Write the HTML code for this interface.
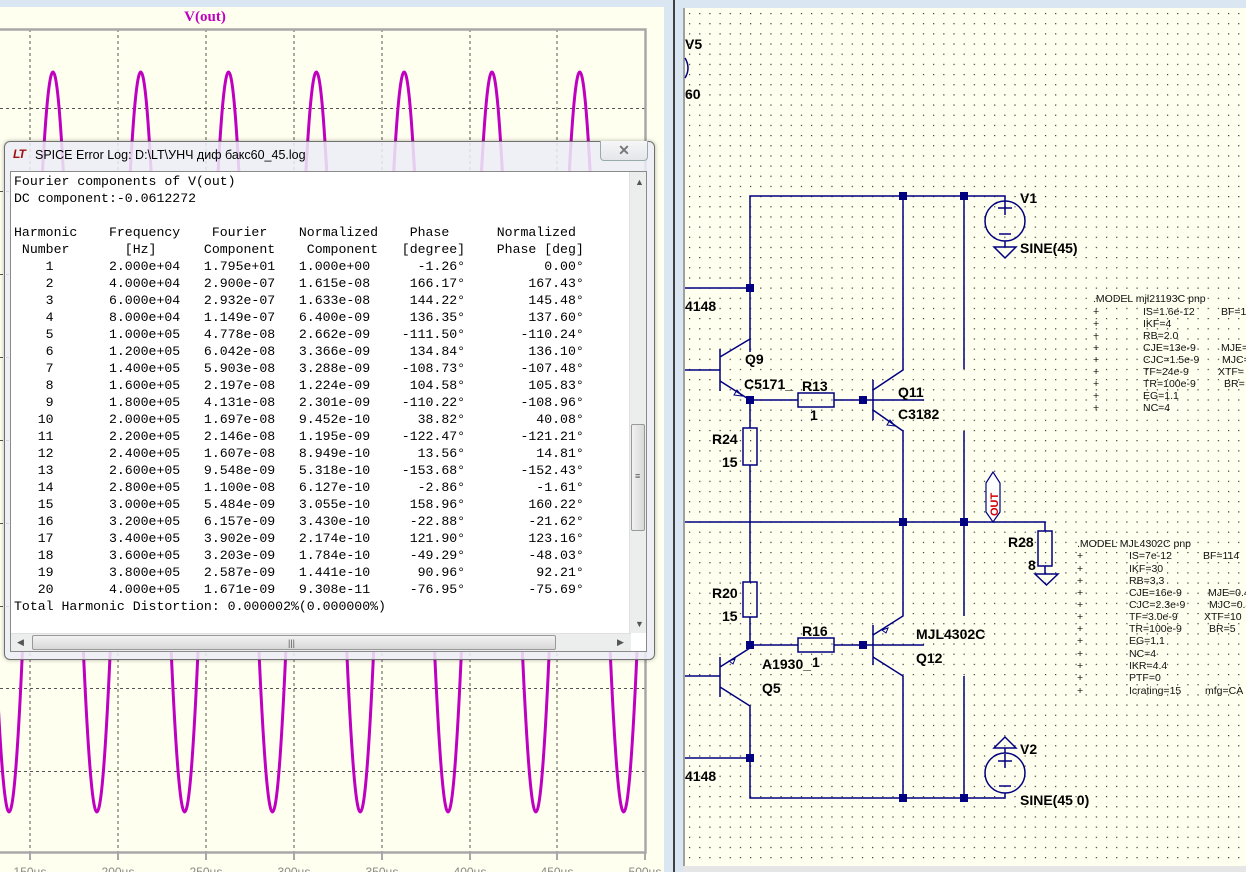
<!DOCTYPE html>
<html><head><meta charset="utf-8">
<style>
*{margin:0;padding:0;box-sizing:border-box}
body{width:1246px;height:872px;overflow:hidden;background:#dbe6f3;position:relative;font-family:"Liberation Sans",sans-serif}
svg{position:absolute;left:0;top:0}
#dlg{position:absolute;left:4px;top:141px;width:651px;height:519px;border:1px solid #707070;border-radius:6px;background:rgba(236,238,246,0.86);box-shadow:0 0 4px rgba(0,0,0,0.3)}
#title{position:absolute;left:30px;top:6px;font-size:12.5px;color:#000;font-family:"Liberation Sans","Noto Sans CJK SC",sans-serif}
#logo{position:absolute;left:8px;top:5px;font-size:12px;font-weight:bold;font-style:italic;color:#a01010;letter-spacing:-1px}
#close{position:absolute;left:595px;top:-1px;width:48px;height:20px;border:1px solid #9aa;border-top:none;border-radius:0 0 4px 4px;background:linear-gradient(#f6f6f8,#e4e6ea);text-align:center;color:#777;font-size:14px;line-height:18px;font-weight:bold}
#box{position:absolute;left:5px;top:29px;width:637px;height:481px;border:1px solid #8a8a8a;background:#fff;overflow:hidden}
pre{position:absolute;left:3px;top:1px;font-family:"Liberation Mono",monospace;font-size:13.2px;line-height:17px;color:#000}
#vs{position:absolute;right:0;top:0;width:17px;height:461px;background:#eceded;border-left:1px solid #e0e0e0}
#vth{position:absolute;left:1px;top:252px;width:14px;height:107px;border:1px solid #999;border-radius:2px;background:linear-gradient(90deg,#f2f2f2,#d8d8d8)}
#hs{position:absolute;left:0;bottom:0;width:620px;height:18px;background:#eceded;border-top:1px solid #e0e0e0}
#hth{position:absolute;left:21px;top:1px;width:524px;height:15px;border:1px solid #999;border-radius:2px;background:linear-gradient(#f2f2f2,#d8d8d8)}
.grip{position:absolute;font-size:9px;color:#555;line-height:9px}
</style></head><body>
<svg width="1246" height="872" viewBox="0 0 1246 872">
<defs>
<pattern id="dots" patternUnits="userSpaceOnUse" x="750" y="196" width="10.17" height="10.17"><rect x="0" y="0" width="1.2" height="1.2" fill="#333"/></pattern>
<clipPath id="pc"><rect x="0" y="29" width="645" height="823"/></clipPath>
</defs>
<!-- plot panel -->
<rect x="0" y="7" width="664" height="865" fill="#ffffef"/>
<rect x="664" y="0" width="9" height="872" fill="#dbe6f3"/>
<rect x="673" y="0" width="2" height="872" fill="#404040"/>
<rect x="675" y="0" width="8" height="872" fill="#dbe6f3"/>
<text x="205" y="21" font-family="Liberation Serif" font-weight="bold" font-size="15" fill="#c000c0" text-anchor="middle">V(out)</text>
<g stroke="#555" stroke-width="1" stroke-dasharray="3,3">
<line x1="30" y1="29" x2="30" y2="852"/><line x1="118" y1="29" x2="118" y2="852"/><line x1="206" y1="29" x2="206" y2="852"/><line x1="294" y1="29" x2="294" y2="852"/><line x1="382" y1="29" x2="382" y2="852"/><line x1="470" y1="29" x2="470" y2="852"/><line x1="557" y1="29" x2="557" y2="852"/>
<line x1="0" y1="108.5" x2="645" y2="108.5"/><line x1="0" y1="191.5" x2="645" y2="191.5"/><line x1="0" y1="274.5" x2="645" y2="274.5"/><line x1="0" y1="357.5" x2="645" y2="357.5"/><line x1="0" y1="440.5" x2="645" y2="440.5"/><line x1="0" y1="523.5" x2="645" y2="523.5"/><line x1="0" y1="606.5" x2="645" y2="606.5"/><line x1="0" y1="688.5" x2="645" y2="688.5"/><line x1="0" y1="771.5" x2="645" y2="771.5"/>
</g>
<path d="M0 29.5H645.5V852.5H0" fill="none" stroke="#a8a8a8" stroke-width="2.5"/>
<g stroke="#a8a8a8" stroke-width="2"><line x1="30" y1="852" x2="30" y2="860"/><line x1="118" y1="852" x2="118" y2="860"/><line x1="206" y1="852" x2="206" y2="860"/><line x1="294" y1="852" x2="294" y2="860"/><line x1="382" y1="852" x2="382" y2="860"/><line x1="470" y1="852" x2="470" y2="860"/><line x1="557" y1="852" x2="557" y2="860"/><line x1="645" y1="852" x2="645" y2="860"/></g>
<g font-size="12" fill="#888" text-anchor="middle"><text x="30" y="876">150µs</text><text x="118" y="876">200µs</text><text x="206" y="876">250µs</text><text x="294" y="876">300µs</text><text x="382" y="876">350µs</text><text x="470" y="876">400µs</text><text x="557" y="876">450µs</text><text x="645" y="876">500µs</text></g>
<path clip-path="url(#pc)" fill="none" stroke="#c000c0" stroke-width="3" d="M-56.75 442c7.16,-189.5 14.01,-370 21.95,-370c7.94,0 14.79,189.5 21.95,370c7.16,189.5 14.01,370 21.95,370c7.94,0 14.79,-189.5 21.95,-370c7.16,-189.5 14.01,-370 21.95,-370c7.94,0 14.79,189.5 21.95,370c7.16,189.5 14.01,370 21.95,370c7.94,0 14.79,-189.5 21.95,-370c7.16,-189.5 14.01,-370 21.95,-370c7.94,0 14.79,189.5 21.95,370c7.16,189.5 14.01,370 21.95,370c7.94,0 14.79,-189.5 21.95,-370c7.16,-189.5 14.01,-370 21.95,-370c7.94,0 14.79,189.5 21.95,370c7.16,189.5 14.01,370 21.95,370c7.94,0 14.79,-189.5 21.95,-370c7.16,-189.5 14.01,-370 21.95,-370c7.94,0 14.79,189.5 21.95,370c7.16,189.5 14.01,370 21.95,370c7.94,0 14.79,-189.5 21.95,-370c7.16,-189.5 14.01,-370 21.95,-370c7.94,0 14.79,189.5 21.95,370c7.16,189.5 14.01,370 21.95,370c7.94,0 14.79,-189.5 21.95,-370c7.16,-189.5 14.01,-370 21.95,-370c7.94,0 14.79,189.5 21.95,370c7.16,189.5 14.01,370 21.95,370c7.94,0 14.79,-189.5 21.95,-370c7.16,-189.5 14.01,-370 21.95,-370c7.94,0 14.79,189.5 21.95,370c7.16,189.5 14.01,370 21.95,370c7.94,0 14.79,-189.5 21.95,-370c7.16,-189.5 14.01,-370 21.95,-370c7.94,0 14.79,189.5 21.95,370c7.16,189.5 14.01,370 21.95,370c7.94,0 14.79,-189.5 21.95,-370"/>
<!-- schematic -->
<rect x="683" y="0" width="563" height="872" fill="#dbe6f3"/>
<rect x="683" y="8" width="2" height="858" fill="#a0a0a0"/>
<rect x="685" y="8" width="561" height="858" fill="#ffffef"/>
<rect x="685" y="8" width="561" height="858" fill="url(#dots)"/>
<rect x="683" y="866" width="563" height="6" fill="#e6e6e6"/>
<g stroke="#000080" stroke-width="1.5" fill="none">
<path d="M750 352V196H1005V201"/>
<path d="M685 288H750"/>
<path d="M685 370H720M720 349V391M750 339L720 357M720 381L750 400"/>
<path d="M750 400H798M834 400H924M873 380V420"/>
<rect x="798" y="393" width="36" height="14"/>
<path d="M873 390L903 370V196M873 410L903 431V522"/>
<path d="M964 196V369M964 431V616M964 676V798"/>
<path d="M750 400V428M750 465V582M750 617V645"/>
<rect x="743" y="428" width="14" height="37"/>
<rect x="743" y="582" width="14" height="35"/>
<path d="M685 522H1045V531M1045 566V574M1035 574H1058L1046.5 585Z"/>
<rect x="1038" y="531" width="14" height="35"/>
<path d="M750 645H798M834 645H924M873 625V665"/>
<rect x="798" y="638" width="36" height="14"/>
<path d="M873 635L903 616V522M873 657L903 676V798"/>
<path d="M685 676H720M720 657V697M750 648L720 667M720 687L750 706V798H1005V793M685 758H750"/>
<circle cx="1005" cy="221" r="20"/><path d="M998 208H1012M1005 201V215M999 234H1011M1005 241V247M994 247H1016L1005 258Z"/>
<circle cx="1005" cy="773" r="20"/><path d="M998 761H1012M1005 754V768M999 786H1011M1005 753V748M994 748H1016L1005 737Z"/>
<path d="M685 58Q691 68 685 78"/>
</g>
<g fill="none" stroke="#000080" stroke-width="1"><path d="M742 396L734 395L737 390Z"/><path d="M895 426L887 425L890 420Z"/><path d="M729 661L735 659L733 664Z"/><path d="M882 630L888 628L886 633Z"/></g>
<path d="M986 483L993 472L1000 483V512L993 522L986 512Z" fill="#fff" stroke="#000080" stroke-width="1.2"/>
<text transform="translate(998,516) rotate(-90)" font-size="11" font-weight="bold" fill="#d00000">OUT</text>
<g fill="#000080"><rect x="899" y="192" width="8" height="8"/><rect x="960" y="192" width="8" height="8"/><rect x="746" y="284" width="8" height="8"/><rect x="746" y="396" width="8" height="8"/><rect x="859" y="396" width="8" height="8"/><rect x="899" y="518" width="8" height="8"/><rect x="960" y="518" width="8" height="8"/><rect x="746" y="641" width="8" height="8"/><rect x="859" y="641" width="8" height="8"/><rect x="746" y="754" width="8" height="8"/><rect x="899" y="794" width="8" height="8"/><rect x="960" y="794" width="8" height="8"/></g>
<g font-size="14" font-weight="bold" fill="#000">
<text x="685" y="49">V5</text><text x="685" y="99">60</text>
<text x="1020" y="203">V1</text><text x="1020" y="253">SINE(45)</text>
<text x="685" y="311">4148</text><text x="685" y="781">4148</text>
<text x="745" y="364">Q9</text><text x="744" y="389">C5171_</text><text x="802" y="391">R13</text><text x="810" y="420">1</text>
<text x="898" y="397">Q11</text><text x="898" y="419">C3182</text>
<text x="712" y="444">R24</text><text x="722" y="467">15</text>
<text x="712" y="598">R20</text><text x="722" y="621">15</text>
<text x="802" y="636">R16</text><text x="762" y="669">A1930_</text><text x="812" y="667">1</text>
<text x="916" y="639">MJL4302C</text><text x="916" y="663">Q12</text><text x="762" y="693">Q5</text>
<text x="1008" y="547">R28</text><text x="1028" y="570">8</text>
<text x="1020" y="754">V2</text><text x="1020" y="805">SINE(45 0)</text>
</g>
<g font-size="10.5" fill="#111">
<text x="1093" y="302">.MODEL mjl21193C pnp</text>
<text x="1093" y="315">+</text><text x="1143" y="315">IS=1.6e-12</text><text x="1221" y="315">BF=1</text>
<text x="1093" y="327">+</text><text x="1143" y="327">IKF=4</text>
<text x="1093" y="339">+</text><text x="1143" y="339">RB=2.0</text>
<text x="1093" y="351">+</text><text x="1143" y="351">CJE=13e-9</text><text x="1221" y="351">MJE=</text>
<text x="1093" y="363">+</text><text x="1143" y="363">CJC=1.5e-9</text><text x="1222" y="363">MJC=</text>
<text x="1093" y="375">+</text><text x="1143" y="375">TF=24e-9</text><text x="1218" y="375">XTF=</text>
<text x="1093" y="387">+</text><text x="1143" y="387">TR=100e-9</text><text x="1224" y="387">BR=</text>
<text x="1093" y="399">+</text><text x="1143" y="399">EG=1.1</text>
<text x="1093" y="411">+</text><text x="1143" y="411">NC=4</text>
<text x="1077" y="547">.MODEL MJL4302C pnp</text>
<text x="1077" y="559">+</text><text x="1129" y="559">IS=7e-12</text><text x="1203" y="559">BF=114</text>
<text x="1077" y="572">+</text><text x="1129" y="572">IKF=30</text>
<text x="1077" y="584">+</text><text x="1129" y="584">RB=3,3</text>
<text x="1077" y="596">+</text><text x="1129" y="596">CJE=16e-9</text><text x="1208" y="596">MJE=0.4</text>
<text x="1077" y="608">+</text><text x="1129" y="608">CJC=2.3e-9</text><text x="1209" y="608">MJC=0.4</text>
<text x="1077" y="620">+</text><text x="1129" y="620">TF=3.0e-9</text><text x="1204" y="620">XTF=10</text>
<text x="1077" y="632">+</text><text x="1129" y="632">TR=100e-9</text><text x="1209" y="632">BR=5</text>
<text x="1077" y="644">+</text><text x="1129" y="644">EG=1.1</text>
<text x="1077" y="657">+</text><text x="1129" y="657">NC=4</text>
<text x="1077" y="669">+</text><text x="1129" y="669">IKR=4.4</text>
<text x="1077" y="681">+</text><text x="1129" y="681">PTF=0</text>
<text x="1077" y="694">+</text><text x="1129" y="694">Icrating=15</text><text x="1205" y="694">mfg=CA</text>
</g>
</svg>
<div id="dlg">
<div id="logo">LT</div>
<div id="title">SPICE Error Log: D:\LT\УНЧ диф бакс60_45.log</div>
<div id="close">✕</div>
<div id="box">
<pre>Fourier components of V(out)
DC component:-0.0612272

Harmonic    Frequency    Fourier    Normalized    Phase      Normalized
 Number       [Hz]      Component    Component   [degree]    Phase [deg]
    1       2.000e+04   1.795e+01   1.000e+00      -1.26°          0.00°
    2       4.000e+04   2.900e-07   1.615e-08     166.17°        167.43°
    3       6.000e+04   2.932e-07   1.633e-08     144.22°        145.48°
    4       8.000e+04   1.149e-07   6.400e-09     136.35°        137.60°
    5       1.000e+05   4.778e-08   2.662e-09    -111.50°       -110.24°
    6       1.200e+05   6.042e-08   3.366e-09     134.84°        136.10°
    7       1.400e+05   5.903e-08   3.288e-09    -108.73°       -107.48°
    8       1.600e+05   2.197e-08   1.224e-09     104.58°        105.83°
    9       1.800e+05   4.131e-08   2.301e-09    -110.22°       -108.96°
   10       2.000e+05   1.697e-08   9.452e-10      38.82°         40.08°
   11       2.200e+05   2.146e-08   1.195e-09    -122.47°       -121.21°
   12       2.400e+05   1.607e-08   8.949e-10      13.56°         14.81°
   13       2.600e+05   9.548e-09   5.318e-10    -153.68°       -152.43°
   14       2.800e+05   1.100e-08   6.127e-10      -2.86°         -1.61°
   15       3.000e+05   5.484e-09   3.055e-10     158.96°        160.22°
   16       3.200e+05   6.157e-09   3.430e-10     -22.88°        -21.62°
   17       3.400e+05   3.902e-09   2.174e-10     121.90°        123.16°
   18       3.600e+05   3.203e-09   1.784e-10     -49.29°        -48.03°
   19       3.800e+05   2.587e-09   1.441e-10      90.96°         92.21°
   20       4.000e+05   1.671e-09   9.308e-11     -76.95°        -75.69°
Total Harmonic Distortion: 0.000002%(0.000000%)</pre>
<div id="vs"><div class="grip" style="left:5px;top:6px">▲</div><div id="vth"><div class="grip" style="left:3px;top:47px">≡</div></div><div class="grip" style="left:5px;top:448px">▼</div></div>
<div id="hs"><div class="grip" style="left:6px;top:4px">◀</div><div id="hth"><div class="grip" style="left:255px;top:3px">|||</div></div><div class="grip" style="left:606px;top:4px">▶</div></div>
</div>
</div>
</body></html>
